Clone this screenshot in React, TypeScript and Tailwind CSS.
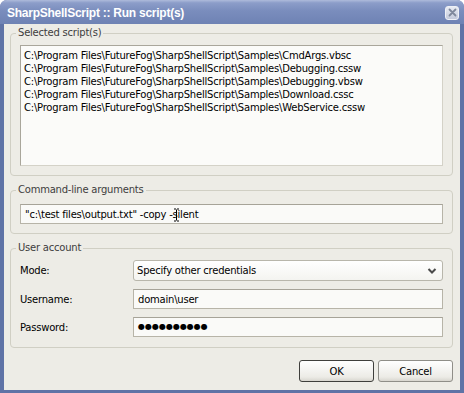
import React from "react";

const font = { fontFamily: '"DejaVu Sans", Verdana, sans-serif' };
const titleFont = { fontFamily: '"Liberation Sans", Arial, sans-serif' };

function GroupBox({ label, className, children }: { label: string; className: string; children: React.ReactNode }) {
  return (
    <div className={`relative border border-[#d0cfc4] rounded-[4px] ${className}`}>
      <span className="absolute top-[-8px] left-[5px] px-[2px] bg-[#edece6] text-[#3d3d3d] leading-[14px]">
        {label}
      </span>
      {children}
    </div>
  );
}

const inputCls =
  "h-[20px] border border-[#b7b4a8] border-t-[#a6a398] bg-[#fafaf8] flex items-center px-[4px] text-black";

export default function App() {
  const files = [
    "C:\\Program Files\\FutureFog\\SharpShellScript\\Samples\\CmdArgs.vbsc",
    "C:\\Program Files\\FutureFog\\SharpShellScript\\Samples\\Debugging.cssw",
    "C:\\Program Files\\FutureFog\\SharpShellScript\\Samples\\Debugging.vbsw",
    "C:\\Program Files\\FutureFog\\SharpShellScript\\Samples\\Download.cssc",
    "C:\\Program Files\\FutureFog\\SharpShellScript\\Samples\\WebService.cssw",
  ];
  return (
    <div className="w-[464px] h-[393px] flex flex-col bg-[#5f73a6] rounded-t-[7px] overflow-hidden text-[10px] tracking-[-0.22px]" style={font}>
      <div className="h-[24px] shrink-0 flex items-center justify-between pl-[7px] pr-[5px] bg-[linear-gradient(to_bottom,#aebbdb_0%,#8c9dc9_12%,#7a8dbd_45%,#6e82b4_100%)]">
        <span className="text-white font-bold text-[12px] tracking-[-0.25px] leading-none mt-[1px]" style={titleFont}>
          SharpShellScript :: Run script(s)
        </span>
        <div className="w-[14px] h-[14px] rounded-[3px] border border-[#eef0f6] bg-[linear-gradient(to_bottom,#e8ebf3,#c4cadb)] flex items-center justify-center mt-[1px]">
          <svg width="9" height="9" viewBox="0 0 9 9">
            <path d="M1.5 1.5 L7.5 7.5 M7.5 1.5 L1.5 7.5" stroke="#7f889c" strokeWidth="1.8" strokeLinecap="round" />
          </svg>
        </div>
      </div>
      <div className="flex-1 mx-[4px] mb-[3px] bg-[#edece6] pl-[6px] pr-[7px] flex flex-col">
        <GroupBox label="Selected script(s)" className="mt-[9px] h-[143px] pt-[11px] pl-[9px] pr-[9px] pb-[9px]">
          <div className="h-full border border-[#a9a69b] border-r-[#d4d2c8] border-b-[#d4d2c8] bg-[#fbfbf9] pt-[3px] pl-[3px] text-black leading-[13px]">
            {files.map((f) => (
              <div key={f}>{f}</div>
            ))}
          </div>
        </GroupBox>
        <GroupBox label="Command-line arguments" className="mt-[14px] h-[44px] pt-[13px] pl-[9px] pr-[9px]">
          <div className={`${inputCls} relative`}>
            <span>"c:\test files\output.txt" -copy -silent</span>
            <svg className="absolute left-[152px] top-[3px]" width="7" height="14" viewBox="0 0 7 14">
              <path d="M1 1 H3 M4 1 H6 M3.5 1.5 V12.5 M1 13 H3 M4 13 H6" stroke="#000" strokeWidth="1" fill="none" />
            </svg>
          </div>
        </GroupBox>
        <GroupBox label="User account" className="mt-[14px] h-[100px] pt-[11px] pl-[9px] pr-[9px] flex flex-col gap-[8px]">
          <div className="flex items-center">
            <span className="w-[113px] text-black">Mode:</span>
            <div className="flex-1 h-[21px] rounded-[3px] border border-[#b8b6ab] bg-[linear-gradient(to_bottom,#ffffff,#f4f4f0)] flex items-center pl-[3px] pr-[3px] text-black">
              <span className="flex-1">Specify other credentials</span>
              <svg width="10" height="8" viewBox="0 0 10 8" className="mr-[2px]">
                <path d="M1.5 2 L5 5.5 L8.5 2" stroke="#4a4a4a" strokeWidth="2" fill="none" />
              </svg>
            </div>
          </div>
          <div className="flex items-center">
            <span className="w-[113px] text-black">Username:</span>
            <div className={`${inputCls} flex-1`}>domain\user</div>
          </div>
          <div className="flex items-center">
            <span className="w-[113px] text-black">Password:</span>
            <div className={`${inputCls} flex-1 text-[8px] tracking-[0px]`}>●●●●●●●●●●</div>
          </div>
        </GroupBox>
        <div className="mt-[12px] flex justify-end gap-[4px]">
          <button className="w-[75px] h-[22px] rounded-[3px] border border-[#3f3f3c] bg-[linear-gradient(to_bottom,#ffffff,#ecebe6_80%,#d8d6cf)] text-black text-[10px]">
            OK
          </button>
          <button className="w-[75px] h-[22px] rounded-[3px] border border-[#8f8e88] bg-[linear-gradient(to_bottom,#ffffff,#ecebe6_80%,#d8d6cf)] text-black text-[10px]">
            Cancel
          </button>
        </div>
      </div>
    </div>
  );
}
